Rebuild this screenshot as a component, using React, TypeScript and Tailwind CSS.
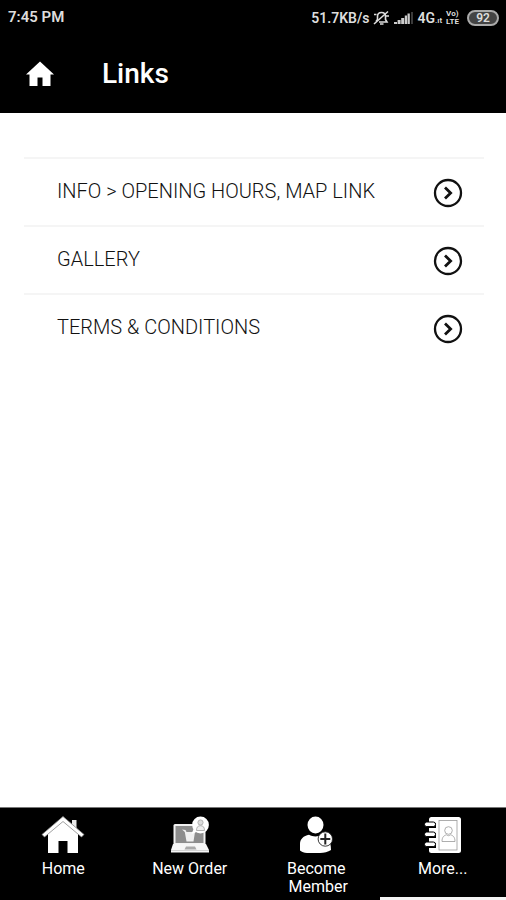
import type { ReactNode } from "react";

const links = [
    "INFO > OPENING HOURS, MAP LINK",
    "GALLERY",
    "TERMS & CONDITIONS",
];

function HeaderHomeIcon() {
    return (
        <svg viewBox="0 0 28 26" className="w-7 h-[26px]" fill="#fff" aria-hidden="true">
            <path d="M14 0.5 L28 13.5 H24.5 V25 H16.5 V16.5 H11.5 V25 H3.5 V13.5 H0 Z" />
        </svg>
    );
}

function ArrowCircleIcon() {
    return (
        <svg viewBox="0 0 30 30" className="w-[30px] h-[30px]" fill="none" stroke="#111" aria-hidden="true">
            <circle cx="15" cy="15" r="13" strokeWidth="2.3" />
            <path d="M12 9.6 L17.6 15 L12 20.4" strokeWidth="2.8" />
        </svg>
    );
}

function MutedBellIcon() {
    return (
        <svg viewBox="0 0 17 16" className="w-[17px] h-4" fill="none" stroke="#ddd" strokeWidth="1.6" aria-hidden="true">
            <path d="M3 11.5 L4.5 9.5 V6.5 C4.5 3.8 6.2 2.5 8.5 2.5 C10.8 2.5 12.5 3.8 12.5 6.5 V9.5 L14 12 H6" />
            <path d="M7 14 H10.5 M1 14 L15 1.5 M1 4.5 H3.5 M13 6 H16" />
        </svg>
    );
}

function SignalIcon() {
    return (
        <svg viewBox="0 0 19 14" className="w-[19px] h-3.5" fill="#ccc" aria-hidden="true">
            <path d="M0 11 H3 V13 H0 Z M3.6 9 H6.6 V13 H3.6 Z M7.2 7 H10.2 V13 H7.2 Z M10.8 4.5 H13 V13 H10.8 Z M13.5 2.5 H15.8 V13 H13.5 Z" />
            <path d="M17 1 H19 V13 H17 Z" fill="#3a3a3a" />
        </svg>
    );
}

function HomeIcon() {
    return (
        <svg viewBox="0 0 44 38" className="w-11 h-[38px]" aria-hidden="true">
            <path d="M31 4 H35.5 V15 L31 11 Z" fill="#e8e8e8" />
            <path d="M22 3 L37 17 V37 H26.5 V25 H17.5 V37 H7 V17 Z" fill="#fff" />
            <path d="M22 0.5 L43 18.5 L40.5 21 L22 5.5 L3.5 21 L1 18.5 Z" fill="#fff" stroke="#888" strokeWidth="0.8" />
        </svg>
    );
}

function OrderIcon() {
    return (
        <svg viewBox="0 0 40 38" className="w-10 h-[38px]" aria-hidden="true">
            <rect x="3.5" y="8" width="32" height="21" rx="1.5" fill="#f2f2f2" />
            <rect x="5.5" y="10" width="28" height="17" fill="#8d8d8d" />
            <path d="M3 28 H36 L39 34 V36.5 H1 V34 Z" fill="#f6f6f6" />
            <path d="M16 30.5 H25 L26.5 33.5 H14.5 Z" fill="#aaa" />
            <path d="M1 34.5 H39" stroke="#bbb" strokeWidth="0.6" />
            <path d="M12 13.5 L15.5 14 L16.5 16 H25 L23.5 25.5 H16.5 L14.8 16 Z" fill="#f0f0f0" />
            <path d="M24 12 L21.5 18 L29 15 Z" fill="#fff" />
            <circle cx="30.5" cy="9" r="8.4" fill="#fff" />
            <circle cx="30.5" cy="6.5" r="2.6" fill="#ddd" stroke="#aaa" strokeWidth="0.9" />
            <path d="M26.5 14.5 C26.5 11 28 9.7 30.5 9.7 C33 9.7 34.5 11 34.5 14.5 Z" fill="#eee" stroke="#aaa" strokeWidth="0.9" />
        </svg>
    );
}

function MemberIcon() {
    return (
        <svg viewBox="0 0 34 38" className="w-[34px] h-[38px]" aria-hidden="true">
            <ellipse cx="16.5" cy="9" rx="8" ry="8.5" fill="#fff" />
            <path d="M1 34.5 V28 C1 23 4.5 20 10 18.8 C14 21 19 21 22.5 18.8 C28 20 32 24 32 34 C29 36 25 37 21 37 H8 C5 37 3 36 1 34.5 Z" fill="#fff" />
            <circle cx="26.3" cy="23" r="7.2" fill="#fff" stroke="#222" strokeWidth="0.9" />
            <path d="M26.3 17.5 V28.5 M21.3 23 H31.3" stroke="#222" strokeWidth="2" />
        </svg>
    );
}

function ContactsIcon() {
    return (
        <svg viewBox="0 0 38 38" className="w-[38px] h-[38px]" aria-hidden="true">
            <rect x="5" y="1" width="32" height="36" rx="2.5" fill="#fff" />
            <path d="M4 7 H12 V12 H4 Z M4 17 H12 V22 H4 Z M4 27 H12 V32 H4 Z" fill="#000" />
            <g fill="#fff" stroke="#000" strokeWidth="1">
                <rect x="0.5" y="6" width="11" height="4.6" rx="2.2" />
                <rect x="0.5" y="16" width="11" height="4.6" rx="2.2" />
                <rect x="0.5" y="26" width="11" height="4.6" rx="2.2" />
            </g>
            <g fill="none" stroke="#999" strokeWidth="0.8">
                <rect x="15" y="4.5" width="18" height="29.5" />
                <circle cx="24.5" cy="14.5" r="3.8" />
                <path d="M18 25.5 C18 21 20 19.5 22.5 18.8 C24 20 25 20 26.5 18.8 C29 19.5 31 21 31 25.5 Z" />
            </g>
        </svg>
    );
}

function NavItem({ label, children }: { label: string; children: ReactNode }) {
    return (
        <a href="#" className="flex flex-col items-center pt-2">
            {children}
            <span className="mt-1.5 whitespace-pre text-center text-base leading-[18px] text-white">
                {label}
            </span>
        </a>
    );
}

export default function App() {
    return (
        <div className="flex min-h-screen flex-col bg-white font-[Roboto,sans-serif]">
            <div className="flex h-9 items-center justify-between bg-black pr-[7px] pl-2 text-sm font-semibold text-[#ddd]">
                <span className="text-[15px]">7:45 PM</span>
                <div className="flex items-center gap-1">
                    <span>51.7KB/s</span>
                    <MutedBellIcon />
                    <SignalIcon />
                    <span className="flex items-baseline">
                        4G<span className="text-[8px]">.ıt</span>
                    </span>
                    <span className="flex flex-col text-[8px] leading-2 font-bold">
                        <span>Vo)</span>
                        <span>LTE</span>
                    </span>
                    <span className="ml-1 flex h-4 w-8 items-center justify-center rounded-full border-2 border-[#aaa] bg-[#444] text-xs">
                        92
                    </span>
                </div>
            </div>

            <header className="flex h-[77px] items-center gap-12 bg-black px-[26px] pb-0.5">
                <a href="#" aria-label="Home">
                    <HeaderHomeIcon />
                </a>
                <h1 className="text-[28px] font-medium leading-8 text-white">Links</h1>
            </header>

            <main className="flex-1 pt-11 pr-[22px] pl-6">
                <ul>
                    {links.map((link) => (
                        <li key={link} className="border-t-2 border-[#f5f5f5]">
                            <a href="#" className="flex h-[66px] items-center justify-between pt-0.5 pr-[21px] pl-[33px] text-[#111]">
                                <span className="pb-1 text-[20px] leading-6 font-light">{link}</span>
                                <ArrowCircleIcon />
                            </a>
                        </li>
                    ))}
                </ul>
            </main>

            <nav className="border-t border-[#777] bg-black">
                <div className="grid h-[89px] grid-cols-4">
                    <NavItem label="Home">
                        <HomeIcon />
                    </NavItem>
                    <NavItem label="New Order">
                        <OrderIcon />
                    </NavItem>
                    <NavItem label={"Become\n Member"}>
                        <MemberIcon />
                    </NavItem>
                    <NavItem label="More...">
                        <ContactsIcon />
                    </NavItem>
                </div>
                <div className="ml-auto h-[3px] w-1/4 bg-[#f5f5f5]" />
            </nav>
        </div>
    );
}
